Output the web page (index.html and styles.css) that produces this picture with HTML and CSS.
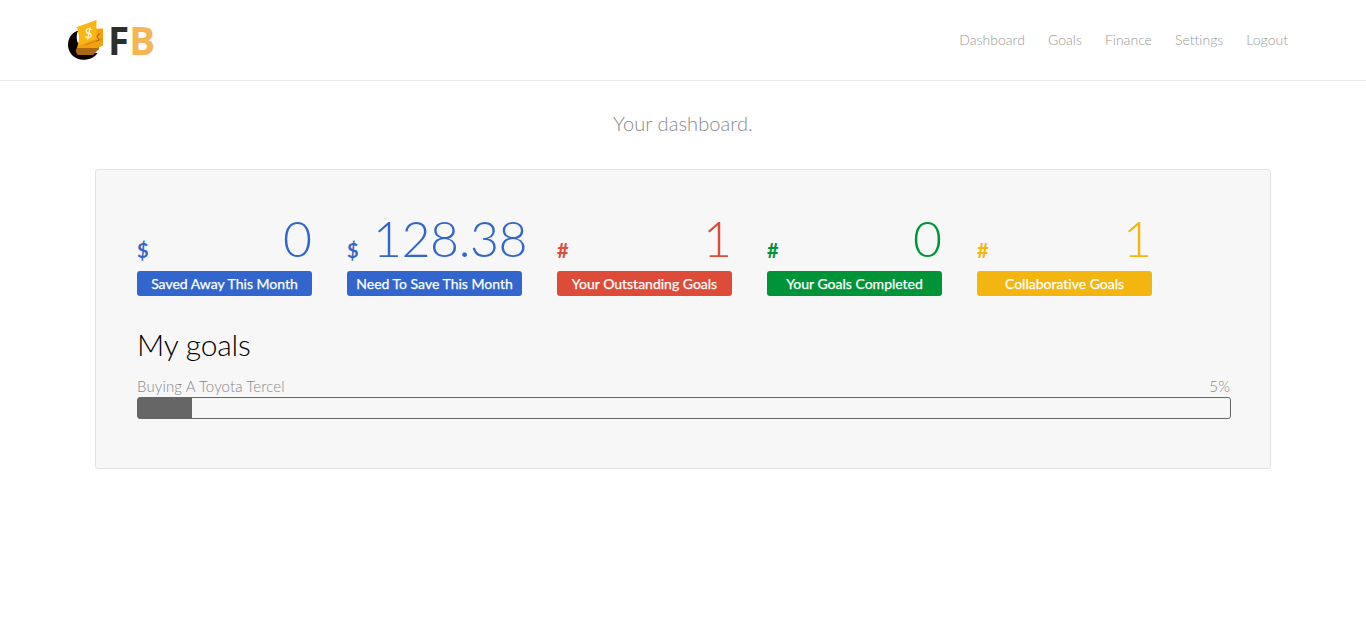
FILE: index.html
```html
<!DOCTYPE html>
<html lang="en">
<head>
<meta charset="utf-8">
<title>Dashboard</title>
<link rel="stylesheet" href="styles.css">
</head>
<body>
<header class="header">
  <a class="logo">
    <svg class="logo-mark" width="36" height="42" viewBox="0 0 36 42">
      <path d="M9 12 C3 14 0 20 0 26 C0 34 7 40.800 15 40.800 C22 40.800 27 38 29.500 34 L12 34 L12 12 Z" fill="#0b0000"/>
      <ellipse cx="10.500" cy="18" rx="1.800" ry="6" fill="#fff"/>
      <path d="M24 10 L35 9.500 V26 L24 31 Z" fill="#f3a20e"/>
      <path d="M9 29 L31 27 L31 30 L25 36 L10 36 Q6 32 9 29 Z" fill="#a86a12"/>
      <path d="M9 8 L28.500 1 V21 L13 26 Q9 27 8.300 31 Q11.500 22 11 17 Q10 12 9 8 Z" fill="#fdb515"/>
      <path d="M13 25.500 L28.500 20 L35 23 V26.500 L29 29 H9 Q9 27 13 25.500 Z" fill="#f2a20e"/>
      <path d="M17 26 L34 20" fill="none" stroke="#c07b10" stroke-width=".8"/>
      <path d="M24 10.500 Q18.500 8.500 18.200 12.200 Q18.500 14.500 21 14.500 Q24 15 22.800 17.800 Q20.500 19.800 17 17.500 M22.300 8 L19.500 20.500" fill="none" stroke="#fff6dc" stroke-width="1.300"/>
      <path d="M31 16 Q28.500 15.500 29 18 L31 20 Q31 22.500 28.500 22 M31 14 V16" fill="none" stroke="#a86a12" stroke-width="1"/>
    </svg>
    <span class="logo-text">F<span class="logo-accent">B</span></span>
  </a>
  <nav class="nav"><a>Dashboard</a><a>Goals</a><a>Finance</a><a>Settings</a><a>Logout</a></nav>
</header>
<main>
  <p class="lead">Your dashboard.</p>
  <section class="panel">
    <div class="stats">
      <div class="stat blue"><div class="figure"><b>$</b><span>0</span></div><div class="label">Saved Away This Month</div></div>
      <div class="stat blue"><div class="figure"><b>$</b><span class="wide">128.38</span></div><div class="label">Need To Save This Month</div></div>
      <div class="stat red"><div class="figure"><b>#</b><span>1</span></div><div class="label">Your Outstanding Goals</div></div>
      <div class="stat green"><div class="figure"><b>#</b><span>0</span></div><div class="label">Your Goals Completed</div></div>
      <div class="stat yellow"><div class="figure"><b>#</b><span>1</span></div><div class="label">Collaborative Goals</div></div>
    </div>
    <h2 class="heading">My goals</h2>
    <div class="goal"><span>Buying A Toyota Tercel</span><span>5%</span></div>
    <div class="progress"><div class="bar" style="width:5%"></div></div>
  </section>
</main>
</body>
</html>
```
FILE: styles.css
```css
* { box-sizing: border-box; }
body { margin: 0; background: #fff; font-family: Lato, sans-serif; font-weight: 300; color: #888; font-variant-ligatures: none; }
.header { display: flex; justify-content: space-between; height: 81px; padding: 0 78px 0 68px; border-bottom: 1px solid #eaeaea; }
.logo { display: flex; padding-top: 19px; }
.logo-mark { display: block; }
.logo-text { margin-left: 4px; font: bold 38.5px/42px "Open Sans", sans-serif; color: #2d2f2d; }
.logo-accent { color: #f6b455; }
.nav { display: flex; gap: 23px; font-size: 14px; line-height: 80px; color: #999; letter-spacing: .02px; }
.lead { margin: 0; padding-top: 27px; height: 88px; font-size: 20px; line-height: 30px; letter-spacing: .1px; text-align: center; }
.panel { width: 1176px; height: 300px; margin: 0 auto; padding: 38px 39px 0 41px; border: 1px solid #e3e3e3; border-radius: 3px; background: #f7f7f7; }
.stats { display: flex; gap: 35px; }
.stat { width: 175px; }
.figure { display: flex; justify-content: space-between; align-items: flex-start; height: 63px; line-height: 60px; }
.figure b { padding-top: 12px; font-size: 20px; font-weight: 700; }
.figure span { font-size: 50px; }
.figure .wide { margin-right: -5px; letter-spacing: -.45px; }
.label { height: 25px; border-radius: 3px; color: #fff; font-size: 14px; font-weight: 400; line-height: 26px; text-align: center; -webkit-text-stroke: .25px #fff; }
.blue { color: #3366cc; }
.blue .label { background: #3366cc; }
.red { color: #dd4b39; }
.red .label { background: #dd4b39; }
.green { color: #009439; }
.green .label { background: #009439; }
.yellow { color: #f3b50f; }
.yellow .label { background: #f3b50f; }
.heading { margin: 28px 0 0; color: #000; font-size: 30px; font-weight: 300; line-height: 40px; letter-spacing: -.2px; }
.goal { display: flex; justify-content: space-between; margin-top: 12px; padding: 0 1px 1px 0; font-size: 15px; line-height: 20px; letter-spacing: .12px; }
.progress { height: 22px; border: 1px solid #666; border-radius: 3px; }
.bar { max-width: 54px; height: 100%; background: #666; }
```
